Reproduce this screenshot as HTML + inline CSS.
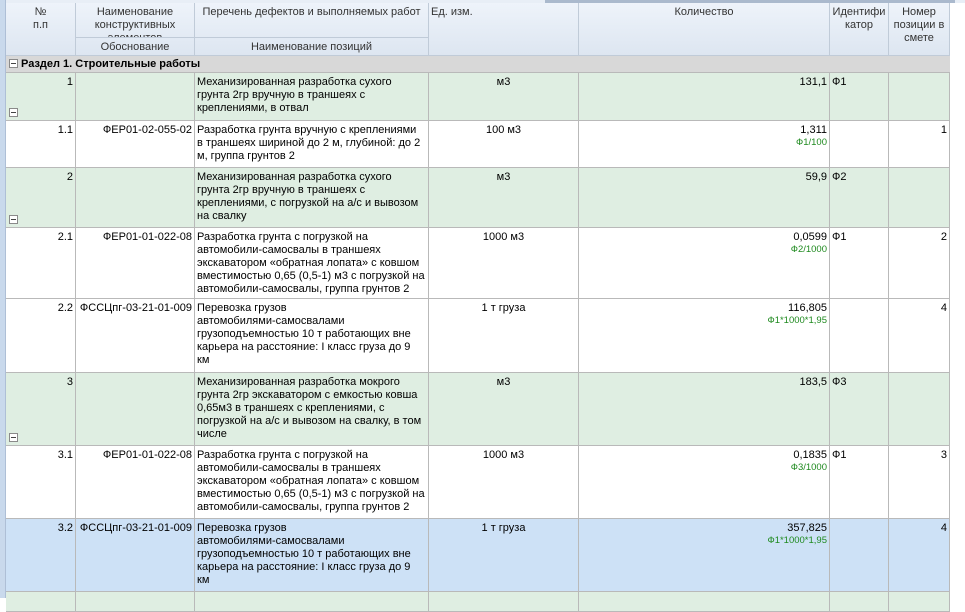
<!DOCTYPE html><html><head><meta charset="utf-8"><style>
*{margin:0;padding:0;box-sizing:border-box}
body{width:965px;height:598px;overflow:hidden;background:#fff;font:11px "Liberation Sans","DejaVu Sans",sans-serif;color:#000;position:relative}
.strip{position:absolute;left:0;top:0;width:6px;height:598px;background:#c9d9ec;border-right:1px solid #aebfd6}
.top{position:absolute;left:6px;top:0;width:959px;height:3px;background:#e8eef6}
.tab{position:absolute;left:545px;top:0;width:410px;height:3px;background:#aab9cd}
.row{position:absolute;left:6px;width:944px;border-bottom:1px solid #b9b9b9}
.row>div{position:absolute;top:0;bottom:0;border-right:1px solid #b9b9b9;padding:3px 2px 0 2px;line-height:13px;white-space:nowrap;overflow:hidden}
.a{left:0;width:70px}.b2{left:70px;width:119px}.c3{left:189px;width:234px}.d{left:423px;width:150px}.e{left:573px;width:251px}.f6{left:824px;width:59px}.g7{left:883px;width:61px}
.g{background:#dfeee2}.bl{background:#cde1f6}
.h{background:linear-gradient(#eef3fa,#dde6f1);color:#333}
.h>div{text-align:center;border-color:#c0cbd8!important}
.r{text-align:right}.c{text-align:center}
.fx{color:#1f8a1f;font-size:9.5px;line-height:12px}
.m{position:absolute;left:3px;bottom:3px;width:9px;height:9px;border:1px solid #8a8a8a;background:#fff}
.m:after,.ms:after{content:"";position:absolute;left:1px;top:3px;width:5px;height:1px;background:#444}
.ms{display:inline-block;position:relative;width:9px;height:9px;border:1px solid #8a8a8a;background:#fff;margin-right:3px;vertical-align:-1px}
.sec{background:#d8d8d8;font-weight:bold;padding:2px 3px;line-height:13px}
</style></head><body>
<div class="strip"></div><div class="top"></div><div class="tab"></div>
<div class="row h" style="top:3px;height:53px;border-color:#c0cbd8">
<div class="a">№<br>п.п</div>
<div class="b2" style="height:35px;bottom:auto;border-bottom:1px solid #c0cbd8">Наименование<br>конструктивных<br>элементов</div>
<div class="b2" style="top:35px">Обоснование</div>
<div class="c3" style="height:35px;bottom:auto;border-bottom:1px solid #c0cbd8">Перечень дефектов и выполняемых работ</div>
<div class="c3" style="top:35px">Наименование позиций</div>
<div class="d" style="text-align:left">Ед. изм.</div>
<div class="e">Количество</div>
<div class="f6">Идентифи<br>катор</div>
<div class="g7">Номер<br>позиции в<br>смете</div>
</div>
<div class="row sec" style="top:56px;height:17px"><span class="ms"></span>Раздел 1. Строительные работы</div>

<div class="row g" style="top:73px;height:48px"><div class="a r">1<span class="m"></span></div><div class="b2"></div><div class="c3">Механизированная разработка сухого<br>грунта 2гр вручную в траншеях с<br>креплениями, в отвал</div><div class="d c">м3</div><div class="e r">131,1</div><div class="f6">Ф1</div><div class="g7"></div></div>

<div class="row" style="top:121px;height:47px"><div class="a r">1.1</div><div class="b2 r">ФЕР01-02-055-02</div><div class="c3">Разработка грунта вручную с креплениями<br>в траншеях шириной до 2 м, глубиной: до 2<br>м, группа грунтов 2</div><div class="d c">100 м3</div><div class="e r">1,311<div class="fx">Ф1/100</div></div><div class="f6"></div><div class="g7 r">1</div></div>

<div class="row g" style="top:168px;height:60px"><div class="a r">2<span class="m"></span></div><div class="b2"></div><div class="c3">Механизированная разработка сухого<br>грунта 2гр вручную в траншеях с<br>креплениями, с погрузкой на а/с и вывозом<br>на свалку</div><div class="d c">м3</div><div class="e r">59,9</div><div class="f6">Ф2</div><div class="g7"></div></div>

<div class="row" style="top:228px;height:71px"><div class="a r">2.1</div><div class="b2 r">ФЕР01-01-022-08</div><div class="c3">Разработка грунта с погрузкой на<br>автомобили-самосвалы в траншеях<br>экскаватором «обратная лопата» с ковшом<br>вместимостью 0,65 (0,5-1) м3 с погрузкой на<br>автомобили-самосвалы, группа грунтов 2</div><div class="d c">1000 м3</div><div class="e r">0,0599<div class="fx">Ф2/1000</div></div><div class="f6">Ф1</div><div class="g7 r">2</div></div>

<div class="row" style="top:299px;height:74px"><div class="a r">2.2</div><div class="b2 r">ФССЦпг-03-21-01-009</div><div class="c3">Перевозка грузов<br>автомобилями-самосвалами<br>грузоподъемностью 10 т работающих вне<br>карьера на расстояние: I класс груза до 9<br>км</div><div class="d c">1 т груза</div><div class="e r">116,805<div class="fx">Ф1*1000*1,95</div></div><div class="f6"></div><div class="g7 r">4</div></div>

<div class="row g" style="top:373px;height:73px"><div class="a r">3<span class="m"></span></div><div class="b2"></div><div class="c3">Механизированная разработка мокрого<br>грунта 2гр экскаватором с емкостью ковша<br>0,65м3 в траншеях с креплениями, с<br>погрузкой на а/с и вывозом на свалку, в том<br>числе</div><div class="d c">м3</div><div class="e r">183,5</div><div class="f6">Ф3</div><div class="g7"></div></div>

<div class="row" style="top:446px;height:73px"><div class="a r">3.1</div><div class="b2 r">ФЕР01-01-022-08</div><div class="c3">Разработка грунта с погрузкой на<br>автомобили-самосвалы в траншеях<br>экскаватором «обратная лопата» с ковшом<br>вместимостью 0,65 (0,5-1) м3 с погрузкой на<br>автомобили-самосвалы, группа грунтов 2</div><div class="d c">1000 м3</div><div class="e r">0,1835<div class="fx">Ф3/1000</div></div><div class="f6">Ф1</div><div class="g7 r">3</div></div>

<div class="row bl" style="top:519px;height:73px"><div class="a r">3.2</div><div class="b2 r">ФССЦпг-03-21-01-009</div><div class="c3">Перевозка грузов<br>автомобилями-самосвалами<br>грузоподъемностью 10 т работающих вне<br>карьера на расстояние: I класс груза до 9<br>км</div><div class="d c">1 т груза</div><div class="e r">357,825<div class="fx">Ф1*1000*1,95</div></div><div class="f6"></div><div class="g7 r">4</div></div>

<div class="row g" style="top:592px;height:20px"><div class="a"></div><div class="b2"></div><div class="c3"></div><div class="d"></div><div class="e"></div><div class="f6"></div><div class="g7"></div></div>
</body></html>
